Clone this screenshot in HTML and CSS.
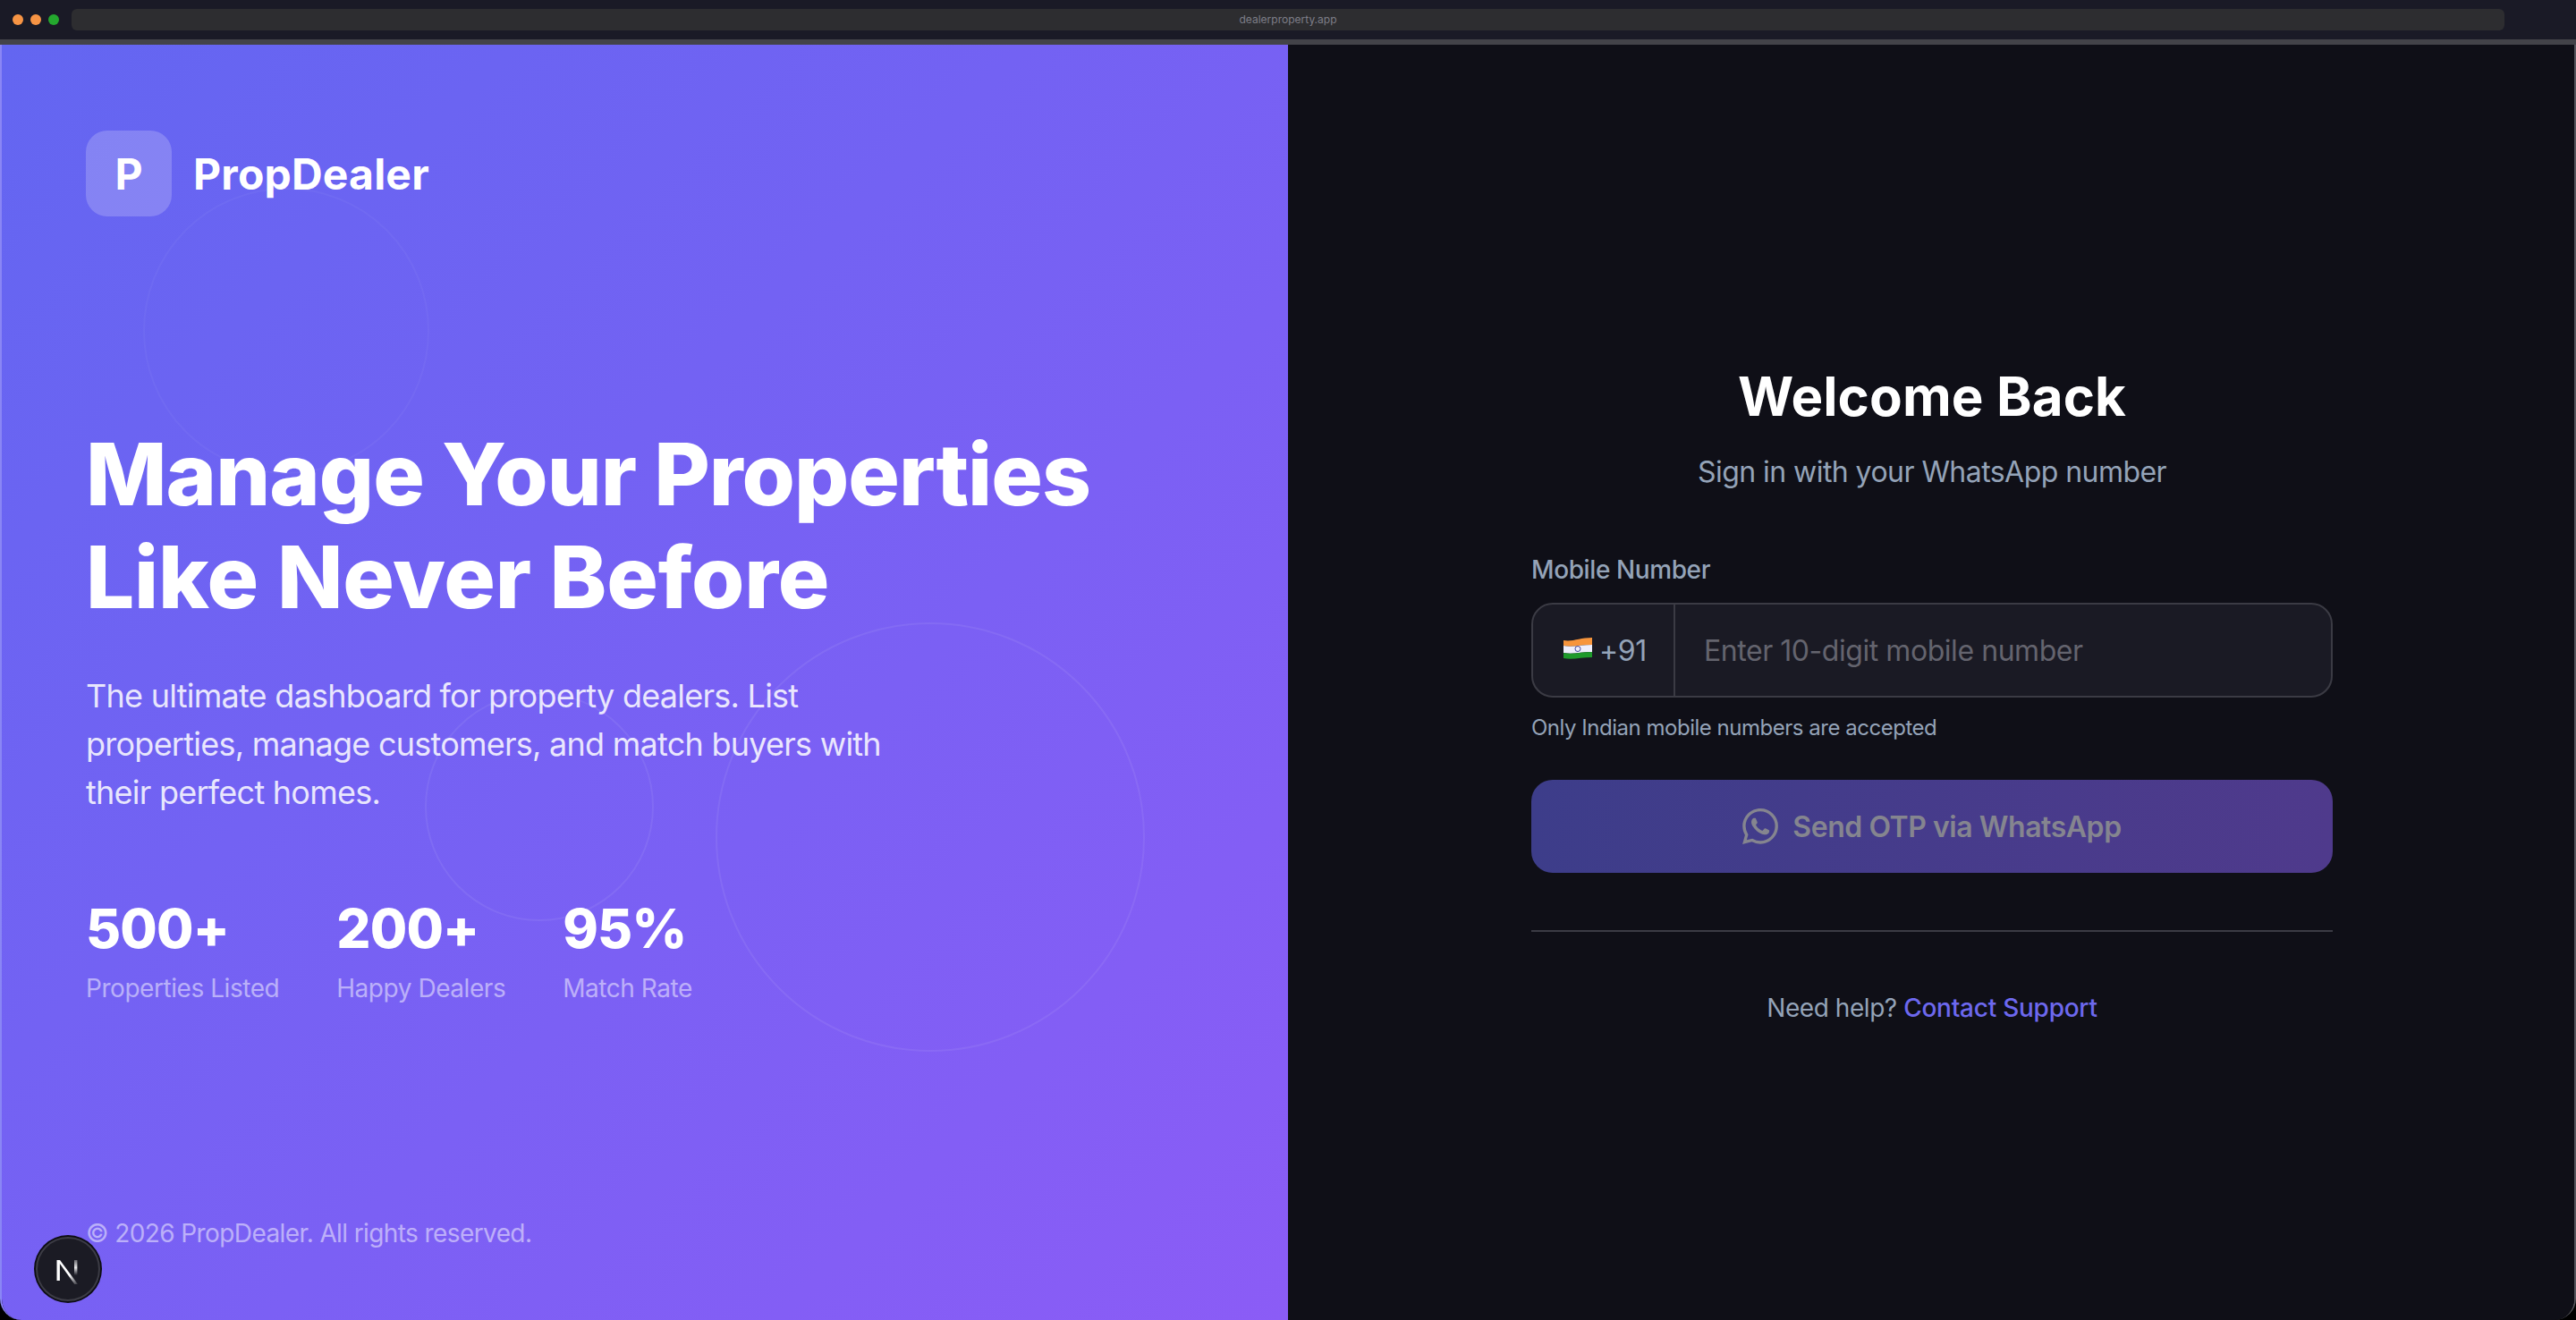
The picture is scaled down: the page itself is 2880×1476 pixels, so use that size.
FILE: index.html
```html
<!DOCTYPE html>
<html lang="en">
<head>
    <meta charset="UTF-8">
    <meta name="viewport" content="width=device-width, initial-scale=1.0">
    <title>PropDealer</title>
    <link rel="stylesheet" href="styles.css">
</head>
<body>

<div class="chrome">
    <div class="dots">
        <span class="dot orange"></span>
        <span class="dot orange"></span>
        <span class="dot green"></span>
    </div>
    <div class="url">dealerproperty.app</div>
</div>

<div class="split">
    <section class="brand">
        <span class="ring ring-a"></span>
        <span class="ring ring-b"></span>
        <span class="ring ring-c"></span>

        <div class="logo">
            <div class="logo-mark">P</div>
            <div class="logo-name">PropDealer</div>
        </div>

        <div class="hero">
            <h1>Manage Your Properties<br><span class="h1-second">Like Never Before</span></h1>
            <p>The ultimate dashboard for property dealers. List properties, manage customers, and match buyers with their perfect homes.</p>
            <div class="stats">
                <div class="stat">
                    <div class="stat-value">500+</div>
                    <div class="stat-label">Properties Listed</div>
                </div>
                <div class="stat">
                    <div class="stat-value">200+</div>
                    <div class="stat-label">Happy Dealers</div>
                </div>
                <div class="stat">
                    <div class="stat-value">95%</div>
                    <div class="stat-label">Match Rate</div>
                </div>
            </div>
        </div>

        <div class="copyright">© 2026 PropDealer. All rights reserved.</div>

        <div class="next-badge">
            <svg viewBox="0 0 40 40" width="40" height="40" fill="none">
                <defs>
                    <linearGradient id="n-diag" x1="9" y1="11" x2="31" y2="37" gradientUnits="userSpaceOnUse">
                        <stop offset="0.6" stop-color="#fff"/>
                        <stop offset="1" stop-color="#fff" stop-opacity="0.1"/>
                    </linearGradient>
                    <linearGradient id="n-right" x1="28" y1="10" x2="28" y2="27" gradientUnits="userSpaceOnUse">
                        <stop offset="0" stop-color="#fff" stop-opacity="0.35"/>
                        <stop offset="0.5" stop-color="#fff" stop-opacity="0.9"/>
                        <stop offset="1" stop-color="#fff" stop-opacity="0"/>
                    </linearGradient>
                </defs>
                <rect x="7.5" y="10" width="3.4" height="23" fill="#fff"/>
                <path d="M8 10h3l20 27h-3.6z" fill="url(#n-diag)"/>
                <rect x="27" y="10" width="3.4" height="17" fill="url(#n-right)"/>
            </svg>
        </div>
    </section>

    <section class="panel">
        <div class="form">
            <h2>Welcome Back</h2>
            <div class="subtitle">Sign in with your WhatsApp number</div>

            <label class="field-label">Mobile Number</label>
            <div class="phone">
                <div class="prefix">
                    <svg class="flag" viewBox="0 0 32 24" width="32" height="24">
                        <path d="M0 3c10 2 18-3 32-3v8C20 8 10 11 0 9z" fill="#f7953c"/>
                        <path d="M0 9c10 2 20-1 32-1v8c-12 0-22 3-32 1z" fill="#eeeefc"/>
                        <path d="M0 17c10 2 20-1 32-1v6c-12 0-22 3-32 1z" fill="#1f9a2c"/>
                        <circle cx="16" cy="12.5" r="3" fill="none" stroke="#45459a" stroke-width="1"/>
                    </svg>
                    <span>+91</span>
                </div>
                <input class="phone-input" type="text" placeholder="Enter 10-digit mobile number">
            </div>
            <div class="hint">Only Indian mobile numbers are accepted</div>

            <button class="send" type="button">
                <svg viewBox="0 0 24 24" width="40" height="40" fill="currentColor"><path d="M17.472 14.382c-.297-.149-1.758-.867-2.03-.967-.273-.099-.471-.148-.67.15-.197.297-.767.966-.94 1.164-.173.199-.347.223-.644.075-.297-.15-1.255-.463-2.39-1.475-.883-.788-1.48-1.761-1.653-2.059-.173-.297-.018-.458.13-.606.134-.133.298-.347.446-.52.149-.174.198-.298.298-.497.099-.198.05-.371-.025-.52-.075-.149-.669-1.612-.916-2.207-.242-.579-.487-.5-.669-.51-.173-.008-.371-.01-.57-.01-.198 0-.52.074-.792.372-.272.297-1.04 1.016-1.04 2.479 0 1.462 1.065 2.875 1.213 3.074.149.198 2.096 3.2 5.077 4.487.709.306 1.262.489 1.694.625.712.227 1.36.195 1.871.118.571-.085 1.758-.719 2.006-1.413.248-.694.248-1.289.173-1.413-.074-.124-.272-.198-.57-.347m-5.421 7.403h-.004a9.87 9.87 0 01-5.031-1.378l-.361-.214-3.741.982.998-3.648-.235-.374a9.86 9.86 0 01-1.51-5.26c.001-5.45 4.436-9.884 9.888-9.884 2.64 0 5.122 1.03 6.988 2.898a9.825 9.825 0 012.893 6.994c-.003 5.45-4.437 9.884-9.885 9.884m8.413-18.297A11.815 11.815 0 0012.05 0C5.495 0 .16 5.335.157 11.892c0 2.096.547 4.142 1.588 5.945L.057 24l6.305-1.654a11.882 11.882 0 005.683 1.448h.005c6.554 0 11.89-5.335 11.893-11.893a11.821 11.821 0 00-3.48-8.413z"/></svg>
                <span>Send OTP via WhatsApp</span>
            </button>

            <div class="divider"></div>

            <div class="help">Need help? <a href="#">Contact Support</a></div>
        </div>
    </section>
</div>

</body>
</html>
```

FILE: styles.css
```css
* {
    box-sizing: border-box;
}
html, body {
    height: 100%;
}
body {
    margin: 0;
    display: flex;
    flex-direction: column;
    overflow: hidden;
    font-family: 'Inter', 'Liberation Sans', sans-serif;
    background: #000;
    color: #fff;
}

/* browser bar */
.chrome {
    flex: none;
    height: 50px;
    display: flex;
    align-items: flex-start;
    gap: 10px;
    padding: 10px 80px 0 14px;
    background: #1a1a26;
    border-bottom: 6px solid #434349;
}
.dots {
    display: flex;
    gap: 8px;
    padding-top: 6px;
}
.dot {
    width: 12px;
    height: 12px;
    border-radius: 50%;
}
.dot.orange {
    background: #f79444;
}
.dot.green {
    background: #24a82e;
}
.url {
    flex: 1;
    height: 24px;
    margin-left: 4px;
    background: #2d2d30;
    border-radius: 6px;
    color: #7e7e88;
    font-size: 12px;
    line-height: 24px;
    text-align: center;
}

.split {
    flex: 1;
    display: flex;
    min-height: 0;
    border-radius: 0 0 24px 24px;
    overflow: hidden;
    border-left: 2px solid #8a86f5;
    border-right: 2px solid #55555c;
}

/* left side */
.brand {
    position: relative;
    width: 1438px;
    flex: none;
    display: flex;
    flex-direction: column;
    padding: 96px 94px 0;
    background: linear-gradient(135deg, #6366f1 0%, #8b5cf6 100%);
}
.ring {
    position: absolute;
    border: 2px solid rgba(255, 255, 255, 0.07);
    border-radius: 50%;
}
.ring-a {
    left: 158px;
    top: 160px;
    width: 320px;
    height: 320px;
    border-color: rgba(255, 255, 255, 0.04);
}
.ring-b {
    left: 473px;
    top: 724px;
    width: 256px;
    height: 256px;
}
.ring-c {
    left: 798px;
    top: 646px;
    width: 480px;
    height: 480px;
}
.logo {
    display: flex;
    align-items: center;
    gap: 24px;
}
.logo-mark {
    width: 96px;
    height: 96px;
    display: flex;
    justify-content: center;
    align-items: center;
    border-radius: 24px;
    background: rgba(255, 255, 255, 0.2);
    font-size: 48px;
    font-weight: 700;
}
.logo-name {
    font-size: 48px;
    font-weight: 700;
    letter-spacing: 0.2px;
}
.hero {
    position: relative;
    margin-top: 231px;
}
h1 {
    margin: 0 0 48px;
    font-size: 96px;
    font-weight: 800;
    line-height: 1.2;
    letter-spacing: -0.95px;
}
.h1-second {
    letter-spacing: -0.2px;
}
.hero p {
    margin: 0 0 85px;
    max-width: 900px;
    font-size: 36px;
    line-height: 1.5;
    letter-spacing: -0.75px;
    color: rgba(255, 255, 255, 0.85);
}
.stats {
    display: flex;
    gap: 64px;
}
.stat-value {
    font-size: 60px;
    font-weight: 800;
    line-height: 80px;
    letter-spacing: -0.8px;
}
.stat-label {
    margin-top: 6px;
    font-size: 28px;
    line-height: 42px;
    letter-spacing: -0.45px;
    color: rgba(255, 255, 255, 0.5);
}
.copyright {
    position: relative;
    margin-top: 226px;
    font-size: 28px;
    line-height: 54px;
    letter-spacing: -0.6px;
    color: rgba(255, 255, 255, 0.5);
}
.next-badge {
    position: absolute;
    left: 38px;
    bottom: 21px;
    width: 72px;
    height: 72px;
    display: flex;
    justify-content: center;
    align-items: center;
    background: #1b1b24;
    border: 2px solid #3c3c45;
    border-radius: 50%;
    box-shadow: 0 0 0 2px #0d0d14;
}

/* right side */
.panel {
    flex: 1;
    display: flex;
    justify-content: center;
    padding: 360px 0 0 2px;
    background: #0f0f17;
}
.form {
    width: 896px;
}
h2 {
    margin: 0;
    text-align: center;
    font-size: 60px;
    font-weight: 700;
    line-height: 66px;
    letter-spacing: 0.1px;
}
.subtitle {
    margin-top: 28px;
    text-align: center;
    font-size: 32px;
    line-height: 48px;
    letter-spacing: -0.55px;
    color: #94a3b8;
}
.field-label {
    display: block;
    margin-top: 64px;
    font-size: 28px;
    line-height: 42px;
    font-weight: 500;
    letter-spacing: -0.4px;
    color: #94a3b8;
}
.phone {
    display: flex;
    height: 106px;
    margin-top: 16px;
    background: #1a1a24;
    border: 2px solid #3b3b44;
    border-radius: 24px;
    overflow: hidden;
}
.prefix {
    width: 159px;
    flex: none;
    display: flex;
    align-items: center;
    gap: 8px;
    padding-left: 34px;
    border-right: 2px solid #3b3b44;
    font-size: 32px;
    letter-spacing: -0.4px;
    color: #94a3b8;
}
.flag {
    flex: none;
    margin-top: -4px;
}
.phone-input {
    flex: 1;
    min-width: 0;
    padding: 0 32px;
    background: transparent;
    border: none;
    outline: none;
    font-family: inherit;
    font-size: 32px;
    letter-spacing: -0.45px;
    color: #fff;
}
.phone-input::placeholder {
    color: #64646e;
    opacity: 1;
}
.hint {
    margin-top: 16px;
    font-size: 24px;
    line-height: 36px;
    letter-spacing: -0.48px;
    color: #94a3b8;
}
.send {
    width: 100%;
    height: 104px;
    margin-top: 40px;
    display: flex;
    justify-content: center;
    align-items: center;
    gap: 16px;
    background: linear-gradient(90deg, #3d3d8a 0%, #4f3a8c 100%);
    border: none;
    border-radius: 24px;
    font-family: inherit;
    font-size: 32px;
    font-weight: 600;
    letter-spacing: -0.45px;
    color: #85858f;
}
.divider {
    height: 2px;
    margin-top: 64px;
    background: #3b3b44;
}
.help {
    margin-top: 64px;
    text-align: center;
    font-size: 28px;
    line-height: 42px;
    letter-spacing: -0.45px;
    color: #94a3b8;
}
.help a {
    color: #6d68ee;
    font-weight: 500;
    letter-spacing: -0.25px;
    text-decoration: none;
}
```
